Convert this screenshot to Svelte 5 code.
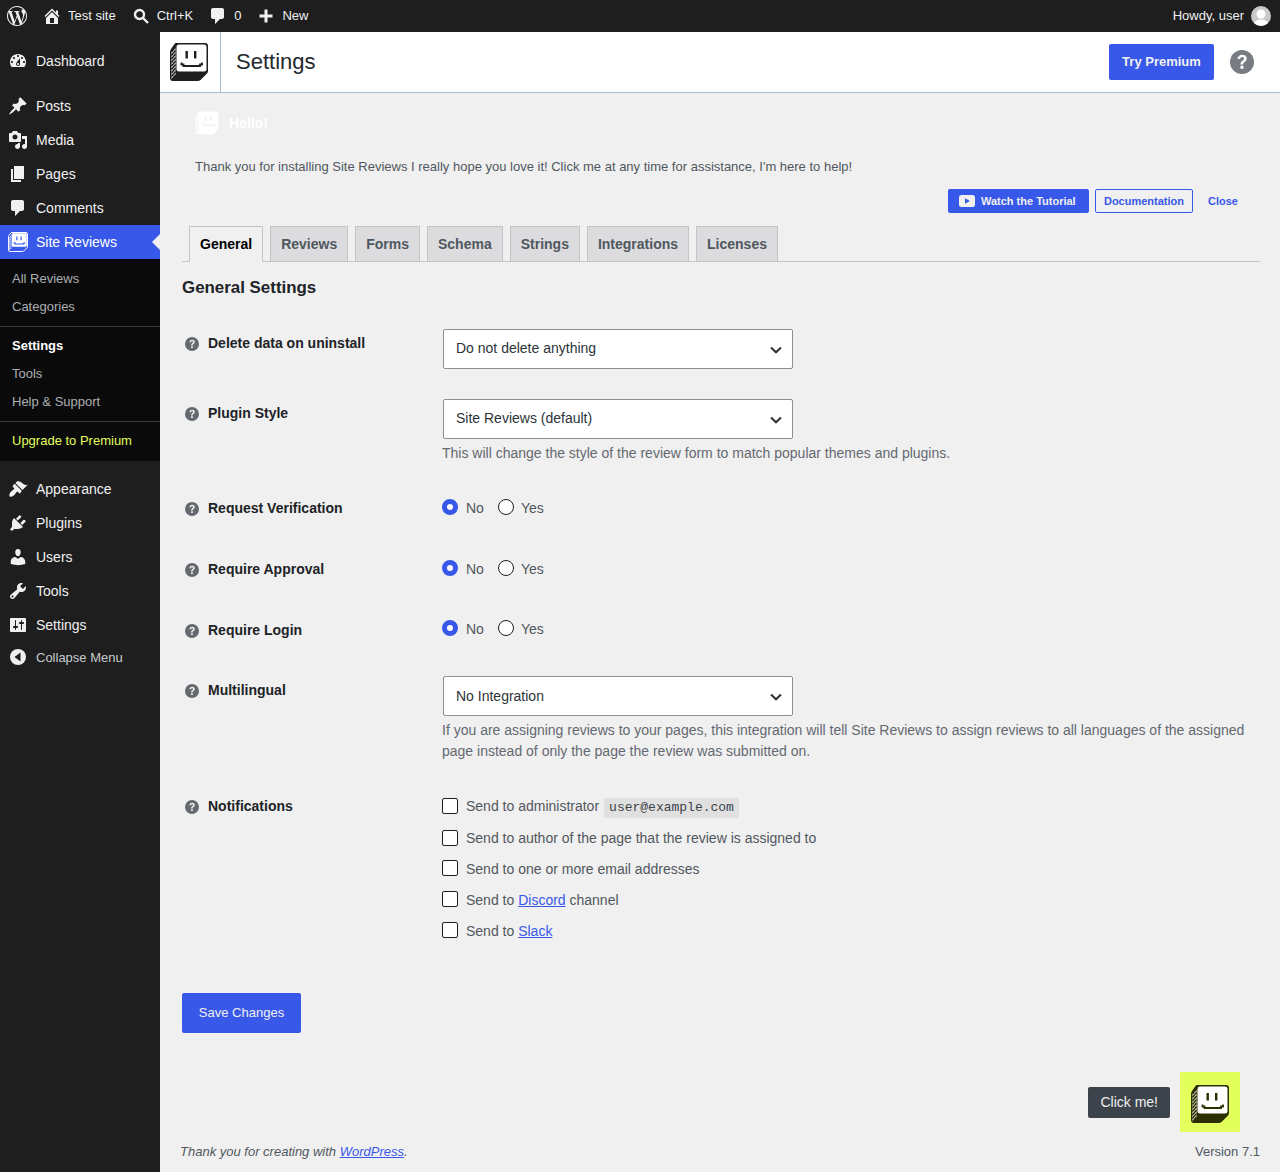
<script>
  const icons = {
    home: 'M16 8.5l1.53 1.53-1.06 1.06L10 4.62l-6.47 6.47-1.06-1.06L10 2.5l4 4v-2h2v4zm-6-2.46l6 5.99V18H4v-5.97zM12 17v-5H8v5h4z',
    comment: 'M5 2h9c1.1 0 2 .9 2 2v7c0 1.1-.9 2-2 2h-2l-5 5v-5H5c-1.1 0-2-.9-2-2V4c0-1.1.9-2 2-2z',
    dashboard: 'M3.76 16h12.48c1.1-1.37 1.76-3.11 1.76-5 0-4.42-3.58-8-8-8s-8 3.58-8 8c0 1.89.66 3.63 1.76 5zM10 4c.55 0 1 .45 1 1s-.45 1-1 1-1-.45-1-1 .45-1 1-1zM6 6c.55 0 1 .45 1 1s-.45 1-1 1-1-.45-1-1 .45-1 1-1zm8 0c.55 0 1 .45 1 1s-.45 1-1 1-1-.45-1-1 .45-1 1-1zm-5.37 5.55L12 7v6c0 1.1-.9 2-2 2s-2-.9-2-2c0-.57.24-1.08.63-1.45zM4 10c.55 0 1 .45 1 1s-.45 1-1 1-1-.45-1-1 .45-1 1-1zm12 0c.55 0 1 .45 1 1s-.45 1-1 1-1-.45-1-1 .45-1 1-1zm-5 3c0-.55-.45-1-1-1s-1 .45-1 1 .45 1 1 1 1-.45 1-1z',
    pin: 'M10.44 3.02l1.82-1.82 6.36 6.35-1.83 1.82c-1.05-.68-2.48-.57-3.41.36l-.75.75c-.92.93-1.04 2.35-.35 3.41l-1.83 1.82-2.41-2.41-2.8 2.79c-.42.42-3.38 2.71-3.8 2.29s1.86-3.39 2.28-3.81l2.79-2.79L4.1 9.36l1.83-1.82c1.05.69 2.48.57 3.4-.36l.75-.75c.93-.92 1.05-2.35.36-3.41z',
    media: 'M13 11V4c0-.55-.45-1-1-1h-1.67L9 1H5L3.67 3H2c-.55 0-1 .45-1 1v7c0 .55.45 1 1 1h10c.55 0 1-.45 1-1zM7 4.5c1.38 0 2.5 1.12 2.5 2.5S8.38 9.5 7 9.5 4.5 8.38 4.5 7 5.62 4.5 7 4.5zM14 6h5v10.5c0 1.38-1.12 2.5-2.5 2.5S14 17.88 14 16.5s1.12-2.5 2.5-2.5c.17 0 .34.02.5.05V9h-3V6zm-4 8.05V13h2v3.5c0 1.38-1.12 2.5-2.5 2.5S7 17.88 7 16.5 8.12 14 9.5 14c.17 0 .34.02.5.05z',
    pages: 'M6 15V2h10v13H6zm-1 1h8v2H3V5h2v11z',
    brush: 'M14.48 11.06L7.41 3.99l1.5-1.5c.5-.56 2.3-.47 3.51.32 1.21.8 1.43 1.28 2.91 2.1 1.18.64 2.45 1.26 4.45.85zm-.71.71L6.7 4.7 4.93 6.47c-.39.39-.39 1.02 0 1.41l1.06 1.06c.39.39.39 1.03 0 1.42-.6.6-1.43 1.11-2.21 1.69-.35.26-.7.53-1.01.84-1.1 1.1-1.5 2.2-1.5 3.7.1.5.4.9.9 1.1 1.5.2 2.8-.3 3.9-1.4.3-.3.6-.7.9-1 .5-.8 1-1.6 1.6-2.2.4-.4 1-.4 1.4 0l1.1 1c.4.4 1 .4 1.4 0z',
    plugin: 'M13.11 4.36L9.87 7.6 8 5.73l3.24-3.24c.35-.34 1.05-.2 1.56.32.52.51.66 1.21.31 1.55zm-8 1.77l.91-1.12 9.01 9.01-1.19.84c-.71.71-2.63 1.16-3.82 1.16H6.14L4.9 17.26c-.59.59-1.54.59-2.12 0-.59-.58-.59-1.53 0-2.12l1.24-1.24v-3.88c0-1.13.4-3.19 1.09-3.89zm7.26 3.97l3.24-3.24c.34-.35 1.04-.21 1.55.31.52.51.66 1.21.31 1.55l-3.24 3.25z',
    users: 'M10 9.25c-2.27 0-2.73-3.44-2.73-3.44C7 4.02 7.82 2 9.97 2c2.16 0 2.98 2.02 2.71 3.81 0 0-.41 3.44-2.68 3.44zm0 2.57L12.72 10c2.39 0 4.52 2.33 4.52 4.53v2.49s-3.65 1.13-7.24 1.13c-3.65 0-7.24-1.13-7.24-1.13v-2.49c0-2.25 1.94-4.48 4.47-4.48z',
    tools: 'M16.68 9.77c-1.34 1.34-3.3 1.67-4.95.99l-5.41 6.52c-.99.99-2.59.99-3.58 0s-.99-2.59 0-3.57l6.52-5.42c-.68-1.65-.35-3.61.99-4.95 1.28-1.28 3.12-1.62 4.72-1.06l-2.89 2.89 2.82 2.82 2.86-2.87c.53 1.58.18 3.39-1.08 4.65zM3.81 16.21c.4.39 1.04.39 1.43 0 .4-.4.4-1.04 0-1.43-.39-.4-1.03-.4-1.43 0-.39.39-.39 1.03 0 1.43z',
    settings: 'M18 16V4c0-.55-.45-1-1-1H3c-.55 0-1 .45-1 1v12c0 .55.45 1 1 1h14c.55 0 1-.45 1-1zM8 11h1c.55 0 1 .45 1 1s-.45 1-1 1H8v1.5c0 .28-.22.5-.5.5s-.5-.22-.5-.5V13H6c-.55 0-1-.45-1-1s.45-1 1-1h1V5.5c0-.28.22-.5.5-.5s.5.22.5.5V11zm5-2h-1c-.55 0-1-.45-1-1s.45-1 1-1h1V5.5c0-.28.22-.5.5-.5s.5.22.5.5V7h1c.55 0 1 .45 1 1s-.45 1-1 1h-1v5.5c0 .28-.22.5-.5.5s-.5-.22-.5-.5V9z'
  };
  const wp = 'M12 2C6.486 2 2 6.486 2 12s4.486 10 10 10 10-4.486 10-10S17.514 2 12 2zM3.009 12c0-1.303.28-2.54.78-3.656l4.283 11.735C5.076 18.624 3.009 15.553 3.009 12zm8.991 8.991c-.883 0-1.734-.129-2.54-.367l2.697-7.836 2.763 7.57c.018.044.04.085.064.124-.934.33-1.939.509-2.984.509zm1.239-13.206c.541-.028 1.029-.085 1.029-.085.484-.057.427-.769-.057-.741 0 0-1.455.114-2.394.114-.883 0-2.366-.114-2.366-.114-.484-.028-.541.712-.057.741 0 0 .458.057.942.085l1.4 3.836-1.966 5.896-3.271-9.732c.541-.028 1.028-.085 1.028-.085.484-.057.427-.769-.057-.741 0 0-1.455.114-2.394.114-.169 0-.368-.004-.579-.011C6.104 4.574 8.88 3.009 12 3.009c2.325 0 4.442.889 6.03 2.345-.038-.002-.076-.007-.115-.007-.883 0-1.509.769-1.509 1.595 0 .741.427 1.367.883 2.108.342.598.741 1.367.741 2.478 0 .769-.296 1.661-.684 2.904l-.897 2.996-3.25-9.643zm3.279 11.981l2.746-7.94c.513-1.282.684-2.307.684-3.219 0-.331-.022-.638-.061-.925.702 1.281 1.102 2.751 1.102 4.314 0 3.317-1.798 6.213-4.471 7.77z';
  const menuTop = [['Posts', 'pin'], ['Media', 'media'], ['Pages', 'pages'], ['Comments', 'comment']];
  const menuBottom = [['Appearance', 'brush'], ['Plugins', 'plugin'], ['Users', 'users'], ['Tools', 'tools'], ['Settings', 'settings']];
  const tabs = ['Reviews', 'Forms', 'Schema', 'Strings', 'Integrations', 'Licenses'];
  const stripes = [10, 13.5, 17, 20.5, 24, 27.5, 31, 34.5, 38];
</script>

{#snippet logo(cls)}
  <svg class="logo {cls}" viewBox="0 0 40 40" aria-hidden="true">
    <path class="dark" d="M7 1H36a3 3 0 0 1 3 3V29q0 2-1.500 3l-6 6q-1 1-3 1H4a3 3 0 0 1-3-3V10q0-1.500 1-3L5.500 2Q6 1 7 1z" />
    <path class="face" d="M2.500 10L6.500 5V33L2.500 37.500z" />
    {#each stripes as y}
      <path class="line" d="M2.500 {y}L6.500 {y - 5}" />
    {/each}
    <rect class="face" x="7.500" y="2.500" width="30" height="27" rx="2.500" />
    <rect class="dark" x="16.500" y="9" width="2.400" height="7.500" />
    <rect class="dark" x="25" y="9" width="2.400" height="7.500" />
    <path class="smile" d="M12.500 20.500V22.500H14.500V24H31V22.500H33V20.500" />
  </svg>
{/snippet}

{#snippet help()}
  <svg class="help" viewBox="0 0 20 20" aria-hidden="true"><circle cx="10" cy="10" r="10" /><path d="M6.300 7.600C6.400 5.300 8 4 10.200 4c2.200 0 3.700 1.300 3.700 3.100 0 1.300-.7 2.100-1.700 2.800-1 .7-1.300 1.100-1.300 2.100H8.800c0-1.500.4-2.300 1.400-3 .9-.6 1.400-1 1.400-1.800 0-.8-.6-1.300-1.500-1.300-1 0-1.500.6-1.600 1.700zM8.700 13.200h2.500v2.500H8.700z" /></svg>
{/snippet}

{#snippet radios()}
  <div class="radios">
    <label><input type="radio" checked />No</label>
    <label><input type="radio" />Yes</label>
  </div>
{/snippet}

{#snippet chevron()}
  <svg class="chev" viewBox="0 0 12 8" aria-hidden="true"><path d="M1 1.500L6 6.300L11 1.500" /></svg>
{/snippet}

<div class="page">
  <header class="bar">
    <svg class="wp" viewBox="2 2 20 20"><path d={wp} /></svg>
    <span class="bi s8"><svg class="ic20" viewBox="0 0 20 20"><path d={icons.home} /></svg>Test site</span>
    <span class="bi s8"><svg class="ic16" viewBox="0 0 16 16"><circle cx="6.500" cy="6.500" r="4.500" /><path d="M10 10L15 15" /></svg>Ctrl+K</span>
    <span class="bi s8"><svg class="ic20" viewBox="0 0 20 20"><path d={icons.comment} /></svg>0</span>
    <span class="bi s8"><svg class="ic16" viewBox="0 0 16 16"><path class="fill" d="M6.500 1.500h3v5h5v3h-5v5h-3v-5h-5v-3h5z" /></svg>New</span>
    <span class="howdy">Howdy, user<span class="avatar"><svg viewBox="0 0 20 20"><circle cx="10" cy="8" r="4.500" /><path d="M2 20c1-5 4-6.500 8-6.500s7 1.500 8 6.500z" /></svg></span></span>
  </header>

  <div class="body">
    <nav class="side">
      <a class="mi first"><svg viewBox="0 0 20 20"><path d={icons.dashboard} /></svg>Dashboard</a>
      <div class="sep"></div>
      {#each menuTop as [label, icon]}
        <a class="mi"><svg viewBox="0 0 20 20"><path d={icons[icon]} /></svg>{label}</a>
      {/each}
      <a class="mi active">{@render logo('mono')}Site Reviews<span class="arrow"></span></a>
      <div class="sub">
        <div class="group g1">
          <a>All Reviews</a>
          <a>Categories</a>
        </div>
        <div class="group">
          <a class="cur">Settings</a>
          <a>Tools</a>
          <a>Help &amp; Support</a>
        </div>
        <div class="group g3">
          <a class="up">Upgrade to Premium</a>
        </div>
      </div>
      <div class="sep"></div>
      {#each menuBottom as [label, icon]}
        <a class="mi"><svg viewBox="0 0 20 20"><path d={icons[icon]} /></svg>{label}</a>
      {/each}
      <a class="mi collapse"><svg viewBox="0 0 20 20"><circle cx="10" cy="10" r="8" /><path class="cut" d="M12.500 5.500V14.500L6.500 10z" /></svg>Collapse Menu</a>
    </nav>

    <main class="main">
      <div class="head">
        <div class="head-logo">{@render logo('big')}</div>
        <h1>Settings</h1>
        <a class="try">Try Premium</a>
        <span class="head-help">{@render help()}</span>
      </div>

      <section class="notice">
        <div class="hello">{@render logo('ghost')}<strong>Hello!</strong></div>
        <p>Thank you for installing Site Reviews I really hope you love it! Click me at any time for assistance, I'm here to help!</p>
        <div class="actions">
          <a class="btn fill"><svg viewBox="0 0 16 12"><rect width="16" height="12" rx="2.500" /><path d="M6 3.200L11 6L6 8.800z" /></svg>Watch the Tutorial</a>
          <a class="btn outline">Documentation</a>
          <a class="btn plain">Close</a>
        </div>
      </section>

      <div class="content">
        <div class="tabs">
          <a class="tab on">General</a>
          {#each tabs as t}
            <a class="tab">{t}</a>
          {/each}
        </div>
        <h2>General Settings</h2>

        <div class="row pick">
          <div class="th">{@render help()}Delete data on uninstall</div>
          <div class="td"><div class="select">Do not delete anything{@render chevron()}</div></div>
        </div>

        <div class="row pick m30">
          <div class="th">{@render help()}Plugin Style</div>
          <div class="td">
            <div class="select">Site Reviews (default){@render chevron()}</div>
            <p class="desc">This will change the style of the review form to match popular themes and plugins.</p>
          </div>
        </div>

        <div class="row m34">
          <div class="th">{@render help()}Request Verification</div>
          <div class="td">{@render radios()}</div>
        </div>
        <div class="row m40">
          <div class="th">{@render help()}Require Approval</div>
          <div class="td">{@render radios()}</div>
        </div>
        <div class="row m40 raised">
          <div class="th">{@render help()}Require Login</div>
          <div class="td">{@render radios()}</div>
        </div>

        <div class="row pick m35">
          <div class="th">{@render help()}Multilingual</div>
          <div class="td">
            <div class="select low">No Integration{@render chevron()}</div>
            <p class="desc">If you are assigning reviews to your pages, this integration will tell Site Reviews to assign reviews to all languages of the assigned page instead of only the page the review was submitted on.</p>
          </div>
        </div>

        <div class="row m34">
          <div class="th">{@render help()}Notifications</div>
          <div class="td checks">
            <label><input type="checkbox" />Send to administrator<code>user@example.com</code></label>
            <label><input type="checkbox" />Send to author of the page that the review is assigned to</label>
            <label><input type="checkbox" />Send to one or more email addresses</label>
            <label><input type="checkbox" /><span>Send to <a class="link">Discord</a> channel</span></label>
            <label><input type="checkbox" /><span>Send to <a class="link">Slack</a></span></label>
          </div>
        </div>

        <button class="save">Save Changes</button>
      </div>

      <footer class="foot">
        <em>Thank you for creating with <a class="link">WordPress</a>.</em>
        <span>Version 7.1</span>
      </footer>

      <div class="assistant">
        <span class="tip">Click me!</span>
        <span class="yellow">{@render logo('big')}</span>
      </div>
    </main>
  </div>
</div>

<style>
  :global(body) {
    margin: 0;
    background: #f0f0f0;
    font-family: "Liberation Sans", Arial, sans-serif;
    font-size: 13px;
    color: #50575e;
  }
  .page { min-height: 1172px; display: flex; flex-direction: column; }

  .bar {
    height: 32px; background: #1e1e1e; color: #f0f0f1; display: flex; align-items: center;
    padding: 0 9px 0 7px; gap: 17px; flex: none; box-sizing: border-box;
  }
  .wp { width: 20px; height: 20px; fill: #f0f0f1; flex: none; }
  .bi { display: flex; align-items: center; gap: 7px; line-height: 32px; }
  .bi.s8 { gap: 8px; }
  .ic20 { width: 20px; height: 20px; fill: #f0f0f1; margin: 0 -2px; flex: none; }
  .ic16 { width: 16px; height: 16px; flex: none; fill: none; stroke: #f0f0f1; stroke-width: 2.400; }
  .ic16 .fill { fill: #f0f0f1; stroke: none; }
  .howdy { margin-left: auto; display: flex; align-items: center; gap: 7px; line-height: 32px; }
  .avatar { width: 20px; height: 20px; border-radius: 50%; background: #c9c9c9; overflow: hidden; display: block; }
  .avatar svg { width: 20px; height: 20px; fill: #fff; display: block; }

  .body { display: flex; flex: 1; }
  .side { width: 160px; flex: none; background: #1e1e1e; padding-top: 12px; box-sizing: border-box; }
  .mi {
    height: 34px; display: flex; align-items: center; gap: 8px; padding-left: 8px; font-size: 14px;
    color: #f0f0f1; position: relative;
  }
  .mi > svg { width: 20px; height: 20px; fill: #f0f0f1; flex: none; }
  .sep { height: 11px; }
  .active { background: #3858e9; color: #fff; }
  .arrow {
    position: absolute; right: 0; top: 9px; width: 0; height: 0;
    border: 8px solid transparent; border-right-color: #f0f0f0; border-left-width: 0;
  }
  .sub { background: #0a0a0a; }
  .group { padding: 5px 0; border-bottom: 1px solid #3c3c3c; }
  .group.g1 { padding: 6px 0 5px; }
  .group.g3 { padding: 5px 0 6px; border-bottom: 0; }
  .group a { display: block; height: 28px; line-height: 28px; padding-left: 12px; color: rgba(240, 246, 252, .7); }
  .group a.cur { color: #fff; font-weight: 700; }
  .group a.up { color: #e3ff5b; }
  .collapse { font-size: 13px; color: rgba(240, 246, 252, .8); margin-top: -2px; }
  .collapse .cut { fill: #1e1e1e; }

  .main { flex: 1; min-width: 0; position: relative; display: flex; flex-direction: column; }
  .head {
    height: 60px; background: #fff; border-bottom: 1px solid #a9bcd0; display: flex; align-items: center;
    padding-right: 26px; flex: none;
  }
  .head-logo {
    height: 60px; width: 51px; padding-left: 9px; border-right: 1px solid #a9bcd0; display: flex; align-items: center;
    flex: none;
  }
  h1 { margin: 0 0 0 15px; font-size: 22px; font-weight: 400; color: #23282d; flex: 1; }
  .try {
    width: 105px; height: 36px; line-height: 36px; text-align: center; border-radius: 2px;
    background: #3858e9; color: #f0f0f1; font-weight: 700; font-size: 13px;
  }
  .head-help { margin-left: 16px; display: flex; }
  .head-help .help { width: 24px; height: 24px; margin: 0; fill: #787c82; }
  .head-help .help path { fill: #fff; }

  .logo { display: block; flex: none; }
  .logo .dark { fill: var(--d); }
  .logo .face { fill: var(--f); }
  .logo .line { stroke: var(--d); stroke-width: 1.500; }
  .logo .smile { fill: none; stroke: var(--d); stroke-width: 1.800; }
  .logo.big { --d: #1e1e1e; --f: #fff; width: 40px; height: 40px; }
  .logo.mono { width: 20px; height: 20px; }
  .logo.mono path.dark { fill: #3858e9; stroke: #fff; stroke-width: 2; }
  .logo.mono .face { fill: #fff; }
  .logo.mono rect.dark { fill: #3858e9; }
  .logo.mono .smile { stroke: #3858e9; stroke-width: 2.400; }
  .logo.mono .line { stroke: #3858e9; }
  .logo.ghost { --d: #fff; --f: #fff; width: 24px; height: 24px; }
  .logo.ghost rect.dark { fill: #f0f0f0; }
  .logo.ghost .smile { stroke: #f0f0f0; }
  .logo.ghost .line { stroke: #f0f0f0; }

  .notice { padding: 18px 51px 0 35px; }
  .hello { display: flex; align-items: center; gap: 10px; height: 24px; }
  .hello strong { color: #fff; font-size: 14px; }
  .notice p { margin: 22px 0 0; line-height: 20px; font-size: 13px; }
  .actions { display: flex; justify-content: flex-end; gap: 6px; margin-top: 12px; }
  .btn {
    height: 24px; box-sizing: border-box; border-radius: 2px; font-size: 11px; font-weight: 700;
    display: flex; align-items: center; color: #3858e9;
  }
  .btn.fill { background: #3858e9; color: #f0f0f1; width: 141px; padding-left: 11px; gap: 6px; box-sizing: border-box; }
  .btn.fill svg { width: 16px; height: 12px; fill: #f0f0f1; }
  .btn.fill path { fill: #3858e9; }
  .btn.outline { border: 1px solid #3858e9; padding: 0 8px; }
  .btn.plain { width: 30px; padding-left: 9px; }

  .content { padding: 13px 20px 0 22px; }
  .tabs { display: flex; height: 36px; box-sizing: border-box; border-bottom: 1px solid #c3c4c7; padding-left: 7px; gap: 7px; }
  .tab {
    height: 36px; box-sizing: border-box; padding: 0 10px; border: 1px solid #c3c4c7; background: #dcdcde;
    color: #50575e; font-size: 14px; font-weight: 700; line-height: 34px;
  }
  .tab.on { background: #f0f0f0; color: #000; border-bottom-color: #f0f0f0; }
  h2 { margin: 0 0 31px; padding-top: 16px; font-size: 16.900px; line-height: 20px; font-weight: 700; color: #1d2327; }

  .row { display: flex; }
  .m30 { margin-top: 30px; }
  .m34 { margin-top: 34px; }
  .m35 { margin-top: 35px; }
  .m40 { margin-top: 40px; }
  .raised .td { margin-top: -1px; }
  .th {
    width: 260px; flex: none; display: flex; align-items: flex-start; font-size: 14px; font-weight: 700;
    color: #1d2327; line-height: 21px;
  }
  .pick .th { padding-top: 4px; }
  .help { width: 14px; height: 14px; margin: 4px 9px 0 3px; fill: #646970; flex: none; }
  .help path { fill: #f0f0f0; }
  .td { flex: 1; min-width: 0; font-size: 14px; line-height: 21px; }
  .select {
    width: 350px; height: 40px; box-sizing: border-box; margin-left: 1px; border: 1px solid #8c8f94; border-radius: 2px;
    background: #fff; color: #2c3338; padding: 0 0 2px 12px; display: flex; align-items: center; position: relative;
  }
  .select.low { padding-bottom: 0; }
  .chev { width: 12px; height: 8px; position: absolute; right: 10px; top: 16px; fill: none; stroke: #2c3338; stroke-width: 2; }
  .desc { margin: 4px 0 0; color: #646970; }

  .radios { display: flex; gap: 14px; }
  .radios label + label input { margin-right: 7px; }
  label { display: flex; align-items: center; color: #50575e; }
  input {
    appearance: none; width: 16px; height: 16px; margin: 0 8px 0 0; background: #fff; box-sizing: border-box;
    border: 1px solid #1e1e1e; flex: none;
  }
  input[type="radio"] { border-radius: 50%; position: relative; top: -2px; }
  input[type="radio"]:checked { border: 5px solid #3858e9; }
  input[type="checkbox"] { border-radius: 2px; position: relative; top: -1px; }
  .checks label:nth-child(n + 3) input { top: -2px; }
  .checks { display: flex; flex-direction: column; gap: 10px; }
  .checks label:first-child { margin-bottom: 1px; }
  code {
    font-family: "Liberation Mono", monospace; font-size: 13px; background: #e0e0e0; color: #3c434a;
    padding: 0 5px; margin-left: 5px; line-height: 20px; position: relative; top: 1px;
  }
  .link { color: #3858e9; text-decoration: underline; }

  .save {
    display: block; margin-top: 51px; width: 119px; height: 40px; border: 0; border-radius: 2px; background: #3858e9;
    color: #f0f0f1; font: 13px "Liberation Sans", Arial, sans-serif; padding: 0 0 2px;
  }
  .foot {
    margin-top: auto; padding: 0 20px; height: 40px; box-sizing: border-box; display: flex; justify-content: space-between;
    line-height: 40px; color: #50575e;
  }
  .assistant { position: absolute; right: 40px; top: 1040px; display: flex; align-items: center; gap: 10px; }
  .tip { background: #3c434a; color: #f0f0f1; font-size: 14px; height: 31px; line-height: 31px; padding: 0 12px; border-radius: 2px; }
  .yellow { width: 60px; height: 60px; background: #e3ff5b; display: flex; align-items: center; justify-content: center; }
  .yellow .logo { --d: #2c3000; margin: 3px 1px 0 0; }
</style>
